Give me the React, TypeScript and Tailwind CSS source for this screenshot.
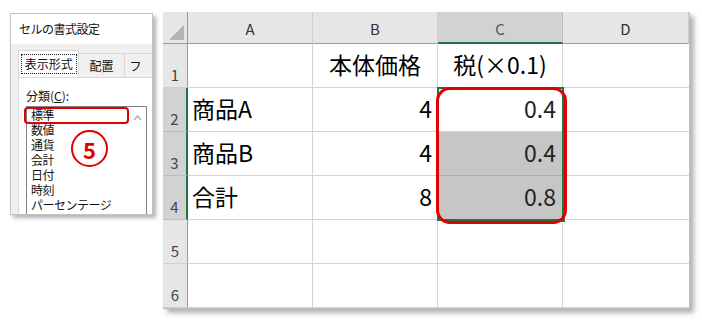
import React from "react";

const font = { fontFamily: '"Noto Sans CJK JP", "Noto Sans", sans-serif' };

const rows = [
  { n: "1", a: "", b: "本体価格", c: "税(×0.1)", head: true },
  { n: "2", a: "商品A", b: "4", c: "0.4" },
  { n: "3", a: "商品B", b: "4", c: "0.4" },
  { n: "4", a: "合計", b: "8", c: "0.8" },
  { n: "5", a: "", b: "", c: "" },
  { n: "6", a: "", b: "", c: "" },
];

function FormatDialog() {
  const items = ["標準", "数値", "通貨", "会計", "日付", "時刻", "パーセンテージ", "分数"];
  return (
    <div className="relative mt-[13px] ml-[10px] w-[143px] h-[202px] shrink-0 border border-[#c4c4c4] bg-[#f0f0f0] shadow-[3px_3px_4px_rgba(0,0,0,0.3)] flex flex-col overflow-hidden text-[#111]">
      <div className="h-[30px] shrink-0 bg-white px-[8px] flex items-center text-[12px] tracking-[-0.5px]">
        セルの書式設定
      </div>
      <div className="h-[33px] shrink-0 flex items-end pl-[7px] text-[12px]">
        <div className="h-[27px] w-[68px] bg-white border border-b-0 border-[#d9d9d9] flex items-center justify-center">
          <span className="border border-dotted border-[#222] px-[3px] leading-[18px]">表示形式</span>
        </div>
        <div className="h-[24px] w-[50px] border-t border-r border-[#d9d9d9] flex items-center justify-center">
          配置
        </div>
        <div className="h-[24px] w-[30px] border-t border-[#d9d9d9] flex items-center pl-[5px]">フ</div>
      </div>
      <div className="flex-1 min-h-0 ml-[7px] bg-white border-t border-l border-[#d9d9d9] pl-[7px] pt-[10px] flex flex-col">
        <div className="shrink-0 text-[12px] leading-[15px]">
          分類(<span className="underline">C</span>):
        </div>
        <div className="mt-[3px] w-[121px] flex-1 min-h-0 overflow-hidden border border-[#828282] border-b-0 flex">
          <div className="flex-1 pl-[4px] flex flex-col text-[12px] leading-[15px] tracking-[-0.5px]">
            {items.map((t) => (
              <div key={t} className="shrink-0 whitespace-nowrap">{t}</div>
            ))}
          </div>
          <div className="w-[17px] flex justify-center pt-[2px]">
            <svg width="9" height="8" viewBox="0 0 9 8" className="mt-[5px]">
              <path d="M1 6 L4.5 2 L8 6" fill="none" stroke="#a6a6a6" strokeWidth="1.2" />
            </svg>
          </div>
        </div>
      </div>
      {/* annotations */}
      <div className="absolute left-[13px] top-[93px] w-[105px] h-[17px] border-2 border-[#e00000] rounded-[4px]" />
      <div className="absolute left-[60px] top-[116px] w-[37px] h-[37px] rounded-full border-[2.5px] border-[#e00000] flex items-center justify-center text-[#e00000] text-[22px] font-bold leading-none">
        5
      </div>
    </div>
  );
}

function Sheet() {
  return (
    <div className="relative mt-[12px] ml-[10px] w-[527px] shrink-0 bg-white border-r border-b border-[#bdbdbd] shadow-[4px_4px_5px_rgba(0,0,0,0.3)]">
      <div className="grid grid-cols-[25px_125px_125px_125px_126px] grid-rows-[32px_repeat(6,44px)] text-[#000]">
        {/* corner */}
        <div className="bg-[#e6e6e6] border-r border-b border-[#9b9b9b] flex items-end justify-end p-[3px]">
          <svg width="15" height="15" viewBox="0 0 15 15">
            <polygon points="15,0 15,15 0,15" fill="#b3b3b3" />
          </svg>
        </div>
        {["A", "B", "C", "D"].map((c) => (
          <div
            key={c}
            className={
              c === "C"
                ? "bg-[#d2d2d2] border-r border-[#bdbdbd] border-b-2 border-b-[#217346] flex items-center justify-center pt-[4px] text-[15px] text-[#555]"
                : "bg-[#e6e6e6] border-r border-[#cfcfcf] border-b border-b-[#9b9b9b] flex items-center justify-center pt-[4px] text-[15px] text-[#333]"
            }
          >
            {c}
          </div>
        ))}
        {rows.map((r, i) => {
          const sel = i >= 1 && i <= 3;
          return (
            <React.Fragment key={r.n}>
              <div
                className={
                  sel
                    ? "bg-[#d2d2d2] border-b border-[#bdbdbd] border-r-2 border-r-[#217346] flex items-end justify-center pb-[3px] text-[15px] leading-[18px] text-[#444]"
                    : "bg-[#e6e6e6] border-b border-[#cfcfcf] border-r border-r-[#9b9b9b] flex items-end justify-center pb-[3px] text-[15px] leading-[18px] text-[#444]"
                }
              >
                {r.n}
              </div>
              <div className="border-r border-b border-[#d4d4d4] flex items-end pl-[4px] pb-[9px] text-[23px] leading-[28px]">
                {r.a}
              </div>
              <div
                className={
                  r.head
                    ? "border-r border-b border-[#d4d4d4] flex items-end justify-center pb-[9px] text-[23px] leading-[28px]"
                    : "border-r border-b border-[#d4d4d4] flex items-end justify-end pr-[5px] pb-[9px] text-[23px] leading-[28px]"
                }
              >
                {r.b}
              </div>
              <div
                className={
                  r.head
                    ? "border-r border-b border-[#d4d4d4] flex items-end justify-center pb-[9px] text-[23px] leading-[28px]"
                    : i === 2 || i === 3
                    ? "bg-[#c6c6c6] border-r border-b border-[#b0b0b0] flex items-end justify-end pr-[6px] pb-[9px] text-[23px] leading-[28px] text-[#222]"
                    : "border-r border-b border-[#d4d4d4] flex items-end justify-end pr-[6px] pb-[9px] text-[23px] leading-[28px] text-[#222]"
                }
              >
                {r.c}
              </div>
              <div className="border-b border-[#d4d4d4]" />
            </React.Fragment>
          );
        })}
      </div>
      {/* selection */}
      <div className="absolute left-[274px] top-[75px] w-[127px] h-[134px] border-2 border-[#217346]" />
      <div className="absolute left-[397px] top-[205px] w-[6px] h-[6px] bg-[#217346] border border-white" />
      {/* annotation */}
      <div className="absolute left-[273px] top-[75px] w-[131px] h-[137px] border-[3px] border-[#e00000] rounded-[14px]" />
    </div>
  );
}

export default function App() {
  return (
    <div className="w-[702px] h-[322px] bg-white flex items-start overflow-hidden" style={font}>
      <FormatDialog />
      <Sheet />
    </div>
  );
}
